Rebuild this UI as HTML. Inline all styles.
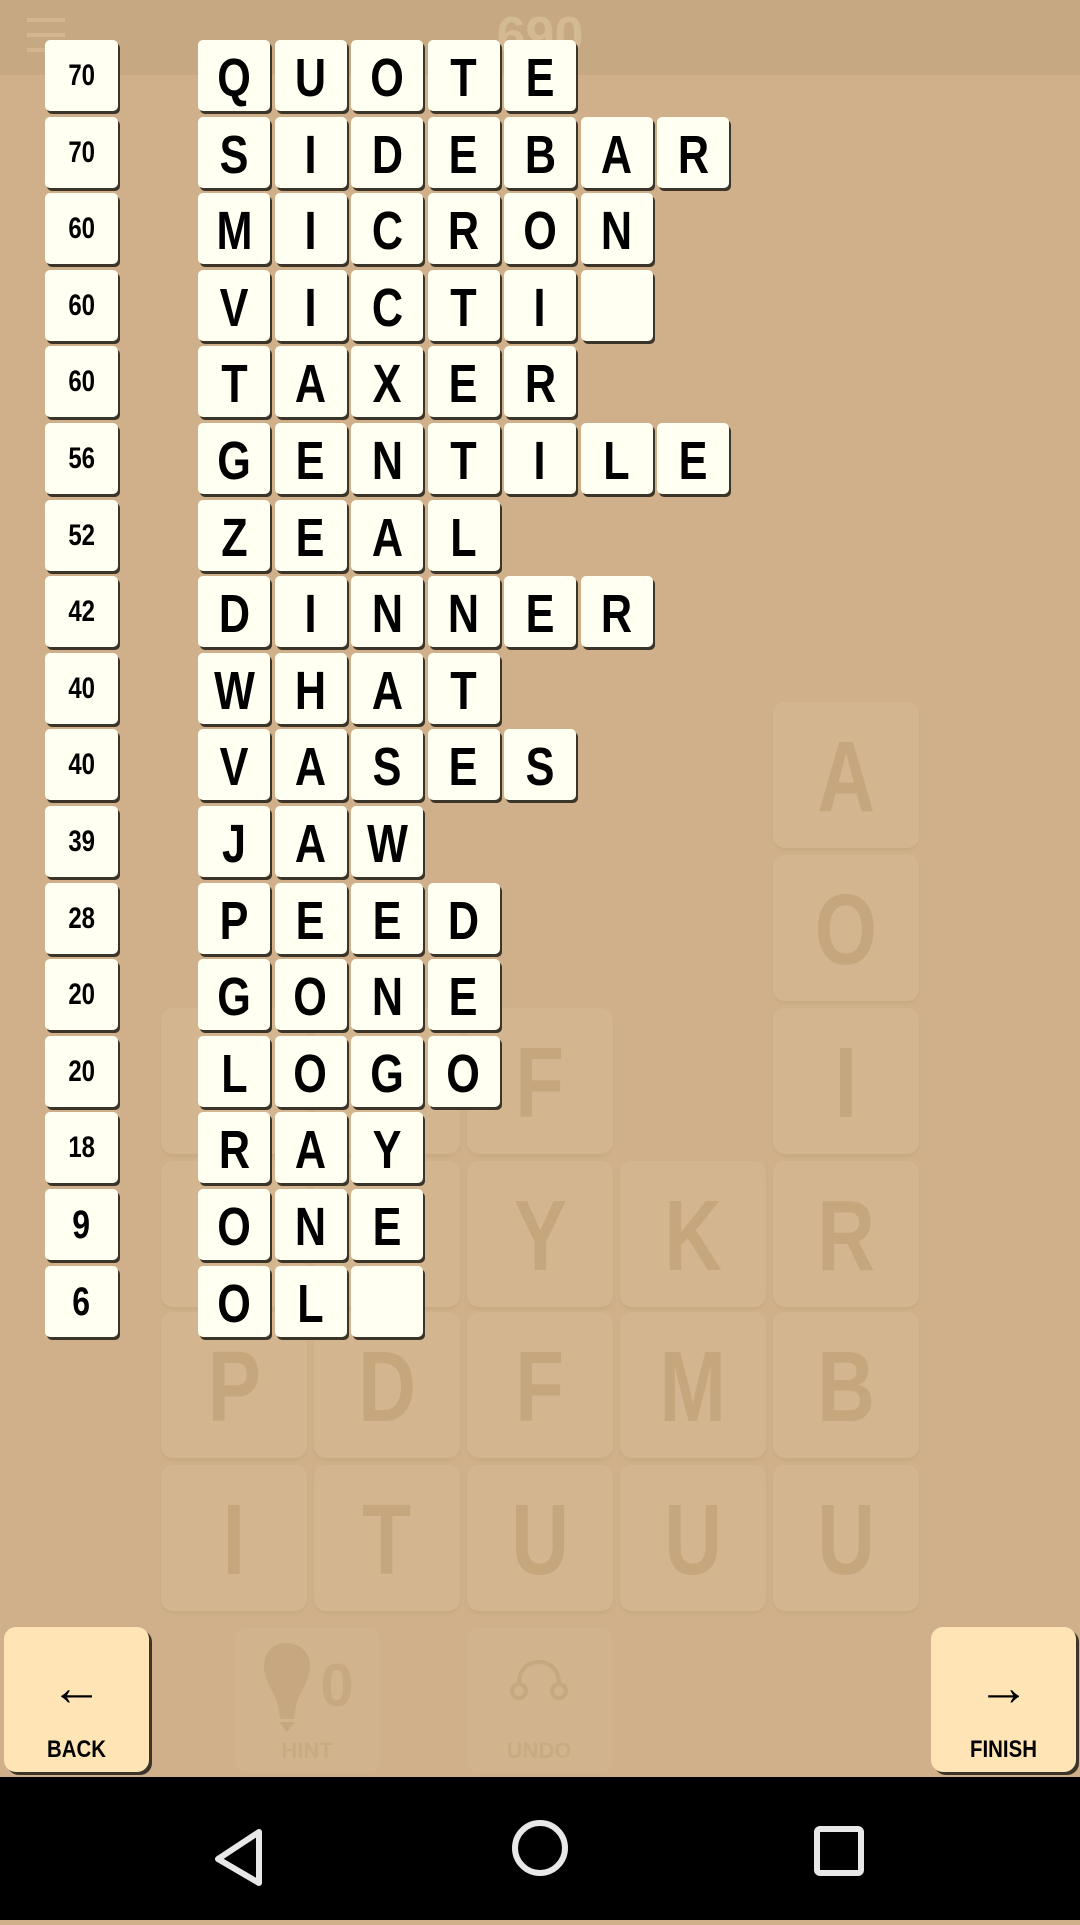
<!DOCTYPE html>
<html><head><meta charset="utf-8"><style>
*{margin:0;padding:0;box-sizing:border-box}
body{width:1080px;height:1920px;background:#cfb08a;position:relative;overflow:hidden;font-family:"Liberation Sans",sans-serif}
.top{position:absolute;left:0;top:0;width:1080px;height:75px;background:#c6a982}
.score{position:absolute;left:0;width:1080px;text-align:center;top:6px;font-size:52px;color:#d3b994;font-weight:bold}
.ham{position:absolute;left:27px;width:38px;height:4px;background:#d2b690}
.bg{position:absolute;width:146px;height:146px;background:#d3b690;border-radius:12px;box-shadow:0 3px 2px #c9ab84;color:#c5a67d;font-size:100px;text-align:center;line-height:150px;font-weight:bold}
.bg span,.t span{display:inline-block;transform:scaleX(0.8)}
.t{position:absolute;width:72px;height:71px;background:#fffff2;border-radius:5px;box-shadow:2px 3px 0 #3b3428;color:#000;text-align:center;font-weight:bold}
.l{font-size:54px;line-height:76px}
.n{font-size:30px;line-height:72px}
.btn{position:absolute;top:1627px;width:145px;height:145px;background:#ffe5b5;border-radius:12px;box-shadow:3px 3px 0 #3b3428;text-align:center;font-weight:bold}
.btn .a{font-size:52px;line-height:52px;margin-top:35px;font-weight:normal}
.btn .b{font-size:24px;margin-top:22px;transform:scaleX(0.85)}
.fb{position:absolute;top:1628px;width:145px;height:145px;border-radius:12px;background:#d1b48d;color:#c7a880;text-align:center;font-weight:bold}
.nav{position:absolute;left:0;top:1777px;width:1080px;height:143px;background:#000}
</style></head><body>
<div class="top"></div>
<div class="ham" style="top:18px"></div><div class="ham" style="top:33px"></div><div class="ham" style="top:48px"></div>
<div class="score">690</div>

<div class="bg" style="left:773px;top:702px"><span>A</span></div>
<div class="bg" style="left:773px;top:855px"><span>O</span></div>
<div class="bg" style="left:161px;top:1008px"></div>
<div class="bg" style="left:314px;top:1008px"></div>
<div class="bg" style="left:467px;top:1008px"><span>F</span></div>
<div class="bg" style="left:773px;top:1008px"><span>I</span></div>
<div class="bg" style="left:161px;top:1161px"></div>
<div class="bg" style="left:314px;top:1161px"></div>
<div class="bg" style="left:467px;top:1161px"><span>Y</span></div>
<div class="bg" style="left:620px;top:1161px"><span>K</span></div>
<div class="bg" style="left:773px;top:1161px"><span>R</span></div>
<div class="bg" style="left:161px;top:1312px"><span>P</span></div>
<div class="bg" style="left:314px;top:1312px"><span>D</span></div>
<div class="bg" style="left:467px;top:1312px"><span>F</span></div>
<div class="bg" style="left:620px;top:1312px"><span>M</span></div>
<div class="bg" style="left:773px;top:1312px"><span>B</span></div>
<div class="bg" style="left:161px;top:1465px"><span>I</span></div>
<div class="bg" style="left:314px;top:1465px"><span>T</span></div>
<div class="bg" style="left:467px;top:1465px"><span>U</span></div>
<div class="bg" style="left:620px;top:1465px"><span>U</span></div>
<div class="bg" style="left:773px;top:1465px"><span>U</span></div>

<div id="rows"></div>

<div class="fb" style="left:235px"><svg width="145" height="145" viewBox="0 0 145 145"><path d="M51 15c-15 0-22 12-22 24 0 14 12 28 14 38l2 14h14l2-14c2-10 14-24 14-38 0-12-7-24-24-24z" fill="#c6a77f"/><path d="M44 94h16l-8 10z" fill="#c6a77f"/><text x="102" y="78" font-size="60" text-anchor="middle" fill="#c7a880" font-family="Liberation Sans" font-weight="bold">0</text><text x="72" y="130" font-size="22" text-anchor="middle" fill="#c9ab83" font-family="Liberation Sans" font-weight="bold">HINT</text></svg></div>
<div class="fb" style="left:467px"><svg width="145" height="145" viewBox="0 0 145 145"><circle cx="52" cy="63" r="7" fill="none" stroke="#c6a77f" stroke-width="4"/><circle cx="92" cy="63" r="7" fill="none" stroke="#c6a77f" stroke-width="4"/><path d="M52 56c0-14 8-22 20-22s20 8 20 22" fill="none" stroke="#c6a77f" stroke-width="4"/><text x="72" y="130" font-size="22" text-anchor="middle" fill="#c9ab83" font-family="Liberation Sans" font-weight="bold">UNDO</text></svg></div>

<div class="btn" style="left:4px"><div class="a">←</div><div class="b">BACK</div></div>
<div class="btn" style="left:931px"><div class="a">→</div><div class="b">FINISH</div></div>

<div class="nav">
<svg width="1080" height="143" viewBox="0 0 1080 143"><path d="M259 55 L259 106 L218 82 Z" fill="none" stroke="#e8e8e8" stroke-width="6" stroke-linejoin="round"/><circle cx="540" cy="71" r="25" fill="none" stroke="#e8e8e8" stroke-width="6"/><rect x="817" y="52" width="44" height="44" rx="3" fill="none" stroke="#e8e8e8" stroke-width="6"/></svg>
</div>

<script>
var data=[["70","QUOTE"],["70","SIDEBAR"],["60","MICRON"],["60","VICTI "],["60","TAXER"],["56","GENTILE"],["52","ZEAL"],["42","DINNER"],["40","WHAT"],["40","VASES"],["39","JAW"],["28","PEED"],["20","GONE"],["20","LOGO"],["18","RAY"],["9","ONE"],["6","OL "]];
var h="";
data.forEach(function(d,i){
 var y=Math.round(40+i*76.6);
 var big=d[0].length==1;
 h+='<div class="t n" style="left:45px;top:'+y+'px;width:73px;'+(big?'font-size:40px;':'')+'"><span>'+d[0]+'</span></div>';
 for(var j=0;j<d[1].length;j++){
  h+='<div class="t l" style="left:'+(198+j*76.5)+'px;top:'+y+'px"><span>'+(d[1][j]==' '?'':d[1][j])+'</span></div>';
 }
});
document.getElementById("rows").innerHTML=h;
</script>
</body></html>
